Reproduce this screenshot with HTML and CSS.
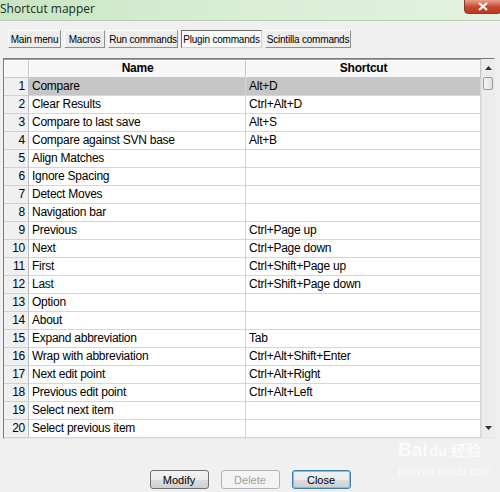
FILE: index.html
```html
<!DOCTYPE html>
<html>
<head>
<meta charset="utf-8">
<link rel="stylesheet" href="styles.css">
</head>
<body>
<div class="window">
  <div class="titlebar">
    <span class="title">Shortcut mapper</span>
    <span class="close"><svg width="14" height="9" viewBox="0 0 14 9"><path d="M3 1 L11 8 M11 1 L3 8" stroke="#fff" stroke-width="2.2"/></svg></span>
  </div>
  <div class="tabs">
    <span class="tab w1">Main menu</span>
    <span class="tab w2">Macros</span>
    <span class="tab w3">Run commands</span>
    <span class="tab w4 active">Plugin commands</span>
    <span class="tab w5">Scintilla commands</span>
  </div>
  <div class="gridwrap">
    <div class="grid">
      <div class="hc corner"></div><div class="hc">Name</div><div class="hc">Shortcut</div>
      <div class="rn">1</div><div class="c sel">Compare</div><div class="c sel">Alt+D</div>
      <div class="rn">2</div><div class="c">Clear Results</div><div class="c">Ctrl+Alt+D</div>
      <div class="rn">3</div><div class="c">Compare to last save</div><div class="c">Alt+S</div>
      <div class="rn">4</div><div class="c">Compare against SVN base</div><div class="c">Alt+B</div>
      <div class="rn">5</div><div class="c">Align Matches</div><div class="c"></div>
      <div class="rn">6</div><div class="c">Ignore Spacing</div><div class="c"></div>
      <div class="rn">7</div><div class="c">Detect Moves</div><div class="c"></div>
      <div class="rn">8</div><div class="c">Navigation bar</div><div class="c"></div>
      <div class="rn">9</div><div class="c">Previous</div><div class="c">Ctrl+Page up</div>
      <div class="rn">10</div><div class="c">Next</div><div class="c">Ctrl+Page down</div>
      <div class="rn">11</div><div class="c">First</div><div class="c">Ctrl+Shift+Page up</div>
      <div class="rn">12</div><div class="c">Last</div><div class="c">Ctrl+Shift+Page down</div>
      <div class="rn">13</div><div class="c">Option</div><div class="c"></div>
      <div class="rn">14</div><div class="c">About</div><div class="c"></div>
      <div class="rn">15</div><div class="c">Expand abbreviation</div><div class="c">Tab</div>
      <div class="rn">16</div><div class="c">Wrap with abbreviation</div><div class="c">Ctrl+Alt+Shift+Enter</div>
      <div class="rn">17</div><div class="c">Next edit point</div><div class="c">Ctrl+Alt+Right</div>
      <div class="rn">18</div><div class="c">Previous edit point</div><div class="c">Ctrl+Alt+Left</div>
      <div class="rn">19</div><div class="c">Select next item</div><div class="c"></div>
      <div class="rn">20</div><div class="c">Select previous item</div><div class="c"></div>
    </div>
    <div class="scrollbar">
      <div class="arrow up"><svg width="7" height="4" viewBox="0 0 7 4"><path d="M0 4 L3.5 0 L7 4 Z" fill="#333"/></svg></div>
      <div class="thumb"></div>
      <div class="track"></div>
      <div class="arrow down"><svg width="7" height="4" viewBox="0 0 7 4"><path d="M0 0 L3.5 4 L7 0 Z" fill="#333"/></svg></div>
    </div>
  </div>
  <div class="buttons">
    <span class="btn">Modify</span>
    <span class="btn disabled">Delete</span>
    <span class="btn default">Close</span>
  </div>
  <div class="watermark">
    <div class="wm1">Bai<span class="du">du</span><span class="cn">经验</span></div>
    <div class="wm2">jingyan.baidu.com</div>
  </div>
</div>
</body>
</html>
```
FILE: styles.css
```css
html, body {
  margin: 0;
  padding: 0;
}
body {
  width: 500px;
  height: 492px;
  overflow: hidden;
  background: #f0f0f0;
  font-family: "Liberation Sans", Arial, sans-serif;
}
.window {
  position: relative;
  width: 500px;
  height: 492px;
}
.titlebar {
  height: 20px;
  background: linear-gradient(to right, #c9e6c4 0%, #d9eed5 50%, #e3f2e0 100%);
  border-bottom: 1px solid #b9cfb6;
  display: flex;
  align-items: center;
  justify-content: space-between;
}
.title {
  margin-left: 0;
  font-family: "Open Sans", "Noto Sans", sans-serif;
  font-size: 12px;
  color: #1b2b1b;
  margin-top: -3px;
  white-space: nowrap;
}
.close {
  width: 36px;
  height: 13px;
  margin-top: -7px;
  margin-right: -2px;
  background: linear-gradient(#e8a090, #c9462c 55%, #b83a22);
  border: 1px solid #8a3a2c;
  border-radius: 0 0 4px 4px;
  display: flex;
  align-items: center;
  justify-content: center;
}
.tabs {
  display: flex;
  gap: 3px;
  padding: 9px 0 0 8px;
  height: 18px;
}
.tab {
  box-sizing: border-box;
  height: 18px;
  font-size: 10px;
  color: #000;
  background: #ececec;
  border: 1px solid;
  border-color: #fdfdfd #8e8e8e #8e8e8e #fdfdfd;
  display: flex;
  align-items: center;
  justify-content: center;
  letter-spacing: -0.2px;
  white-space: nowrap;
}
.tab.active {
  background: #fafafa;
  border-color: #6b6b6b #d0d0d0 #d0d0d0 #6b6b6b;
}
.w1 { width: 53px; }
.w2 { width: 41px; }
.w3 { width: 70px; }
.w4 { width: 81px; }
.w5 { width: 86px; }
.gridwrap {
  margin: 10px 0 0 3px;
  width: 492px;
  height: 381px;
  display: flex;
  box-sizing: border-box;
  border-top: 1px solid #7a7a7a;
  border-left: 1px solid #7a7a7a;
  border-bottom: 1px solid #e6e6e6;
  border-right: 1px solid #e6e6e6;
}
.grid {
  width: 477px;
  display: grid;
  grid-template-columns: 25px 217px 235px;
  grid-auto-rows: 18px;
  align-content: start;
  background: #fff;
  border-top: 1px solid #a0a0a0;
}
.grid > div {
  box-sizing: border-box;
  border-right: 1px solid #d6d6d6;
  border-bottom: 1px solid #d6d6d6;
  font-size: 12px;
  letter-spacing: -0.25px;
  line-height: 17px;
  white-space: nowrap;
  overflow: hidden;
  color: #000;
}
.grid > .hc {
  background: #f7f7f7;
  font-weight: bold;
  text-align: center;
  border-right-color: #c8c8c8;
  border-bottom-color: #c8c8c8;
  border-left: 1px solid #fff;
  border-top: 1px solid #fff;
  line-height: 15px;
}
.grid > .rn {
  background: #f0f0f0;
  text-align: right;
  padding-right: 3px;
  border-right-color: #bdbdbd;
  border-bottom-color: #d0d0d0;
}
.grid > .c {
  padding-left: 3px;
}
.grid > .c.sel {
  background: #c6c6c6;
}
.scrollbar {
  width: 14px;
  display: flex;
  flex-direction: column;
  background: #ececec;
  border-left: 1px solid #e0e0e0;
}
.arrow {
  height: 17px;
  display: flex;
  align-items: center;
  justify-content: center;
}
.thumb {
  margin: 1px 1px 0 1px;
  height: 13px;
  box-sizing: border-box;
  border: 1px solid #9a9a9a;
  border-radius: 2px;
  background: linear-gradient(to right, #f6f6f6, #dedede);
}
.track {
  flex: 1;
}
.arrow.down {
  height: 17px;
  margin-bottom: 2px;
}
.buttons {
  display: flex;
  justify-content: center;
  gap: 12px;
  margin-top: 31px;
  padding-right: 0;
}
.btn {
  box-sizing: border-box;
  width: 59px;
  height: 19px;
  font-size: 11px;
  border: 1px solid #707070;
  border-radius: 3px;
  background: linear-gradient(#f2f2f2 0%, #ebebeb 50%, #dddddd 51%, #cfcfcf 100%);
  display: flex;
  align-items: center;
  justify-content: center;
  color: #000;
}
.btn.disabled {
  color: #a0a0a0;
  border-color: #adb2b5;
  background: #f4f4f4;
}
.btn.default {
  border-color: #3c7fb1;
  box-shadow: inset 0 0 0 1px #48d8fb;
}
.watermark {
  position: absolute;
  left: 398px;
  top: 440px;
  color: rgba(255, 255, 255, 0.75);
  pointer-events: none;
}
.wm1 {
  font-size: 19px;
  font-weight: bold;
  font-family: "Liberation Sans", sans-serif;
  line-height: 20px;
}
.wm1 .du {
  font-size: 14px;
  margin-left: 2px;
}
.wm1 .cn {
  font-family: "Noto Sans CJK SC", sans-serif;
  font-size: 15px;
  margin-left: 4px;
}
.wm2 {
  font-size: 11px;
  margin-top: 4px;
  letter-spacing: 0.3px;
}
```
